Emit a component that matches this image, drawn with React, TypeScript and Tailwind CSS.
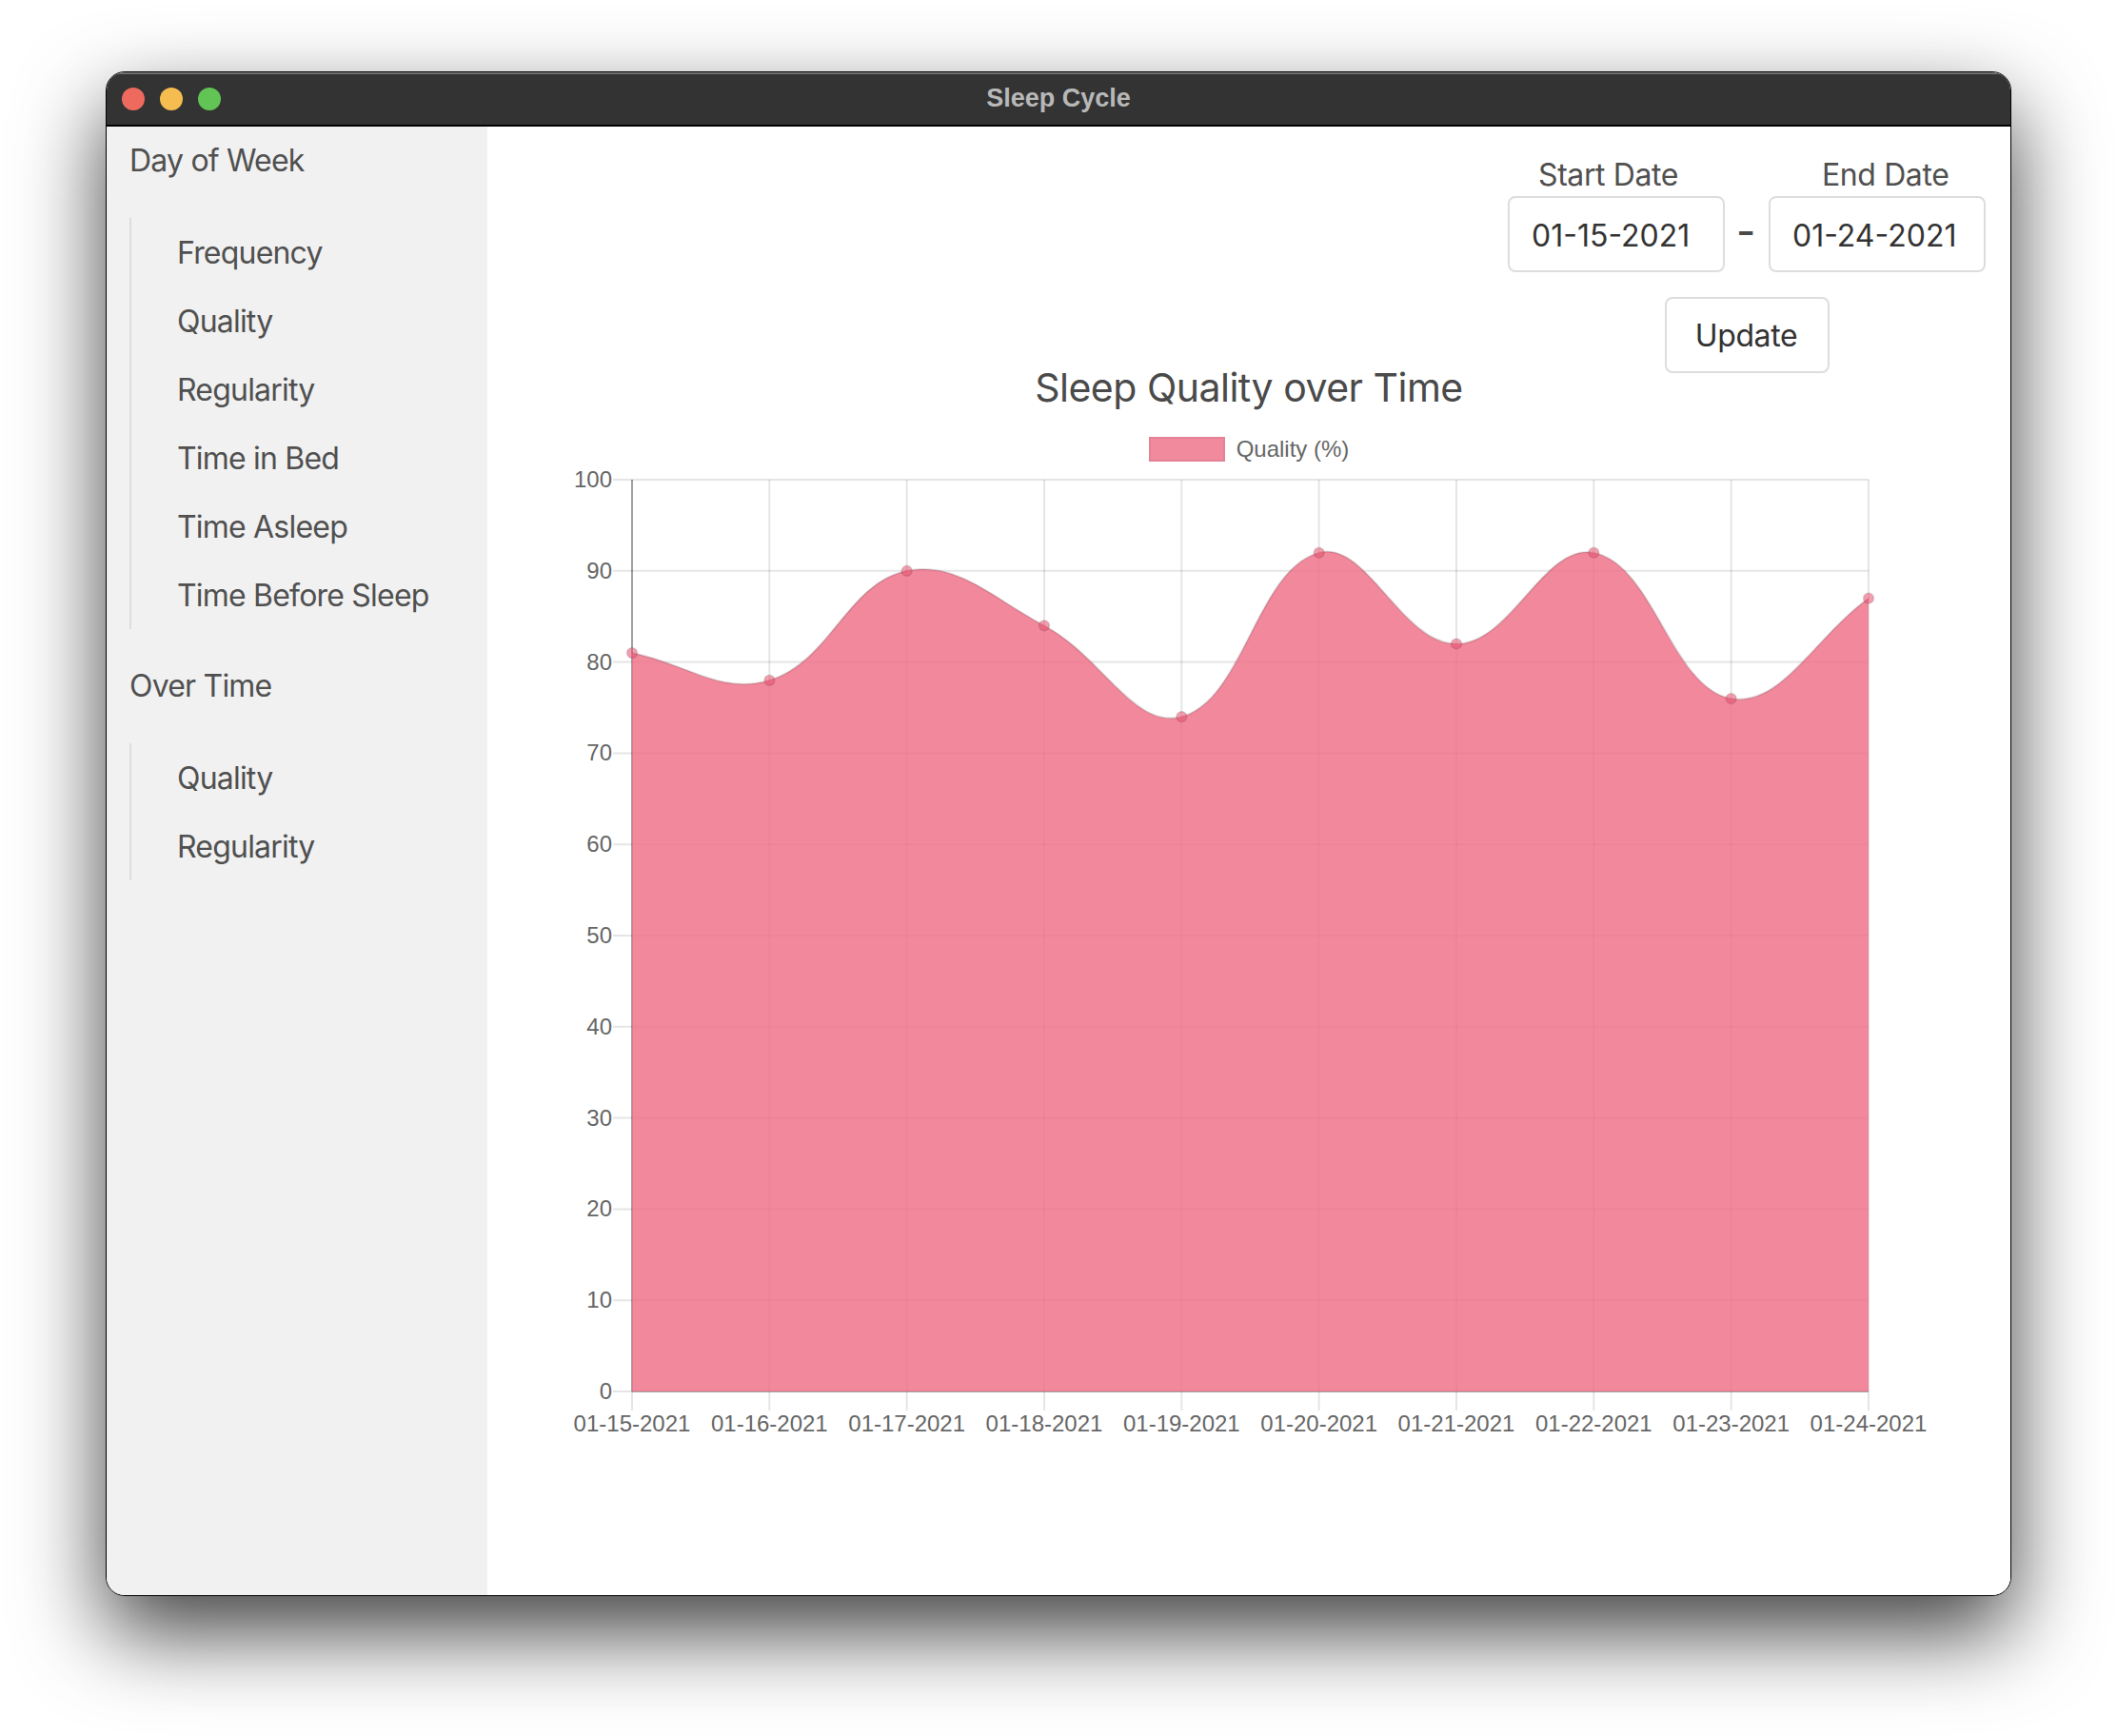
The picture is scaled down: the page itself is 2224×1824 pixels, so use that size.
const qualityData = [81, 78, 90, 84, 74, 92, 82, 92, 76, 87];
const dates = ['01-15-2021', '01-16-2021', '01-17-2021', '01-18-2021', '01-19-2021', '01-20-2021', '01-21-2021', '01-22-2021', '01-23-2021', '01-24-2021'];
const yTicks = [100, 90, 80, 70, 60, 50, 40, 30, 20, 10, 0];

const X0 = 664;
const X_STEP = (1963 - 664) / 9;
const Y0 = 1462;
const Y_UNIT = 9.58;
const TENSION = 0.4;

const toX = (i: number) => X0 + i * X_STEP;
const toY = (v: number) => Y0 - v * Y_UNIT;
const points = qualityData.map((v, i) => ({ x: toX(i), y: toY(v) }));

// same control points chart.js uses for a tension curve
function buildCurve() {
  const controls = points.map((cur, i) => {
    const prev = points[i - 1] || cur;
    const next = points[i + 1] || cur;
    const d01 = Math.hypot(cur.x - prev.x, cur.y - prev.y);
    const d12 = Math.hypot(next.x - cur.x, next.y - cur.y);
    const s01 = d01 / (d01 + d12);
    const s12 = d12 / (d01 + d12);
    return {
      before: { x: cur.x - TENSION * s01 * (next.x - prev.x), y: cur.y - TENSION * s01 * (next.y - prev.y) },
      after: { x: cur.x + TENSION * s12 * (next.x - prev.x), y: cur.y + TENSION * s12 * (next.y - prev.y) },
    };
  });
  let d = `M${points[0].x} ${points[0].y}`;
  for (let i = 1; i < points.length; i++) {
    const a = controls[i - 1].after;
    const b = controls[i].before;
    d += ` C${a.x} ${a.y} ${b.x} ${b.y} ${points[i].x} ${points[i].y}`;
  }
  return d;
}

const curve = buildCurve();
const area = `${curve} L${toX(9)} ${Y0} L${X0} ${Y0} Z`;

function QualityChart() {
  return (
    <svg viewBox="512 490 1600 1030" className="block h-[1030px] w-[1600px]" style={{ fontFamily: '"Liberation Sans", Arial, sans-serif' }}>
      {yTicks.map((t) => (
        <g key={t}>
          <line x1={644} x2={1963} y1={toY(t)} y2={toY(t)} stroke="rgba(0,0,0,0.1)" strokeWidth={2} />
          <text x={643} y={toY(t) + 8} textAnchor="end" fontSize={24} fill="#666">{t}</text>
        </g>
      ))}
      {dates.map((label, i) => (
        <g key={label}>
          <line x1={toX(i)} x2={toX(i)} y1={504} y2={1482} stroke="rgba(0,0,0,0.1)" strokeWidth={2} />
          <text x={toX(i)} y={1504} textAnchor="middle" fontSize={24} fill="#666">{label}</text>
        </g>
      ))}
      <line x1={X0} x2={X0} y1={504} y2={Y0} stroke="rgba(0,0,0,0.3)" strokeWidth={2} />
      <line x1={X0} x2={1963} y1={Y0} y2={Y0} stroke="rgba(0,0,0,0.25)" strokeWidth={2} />
      <path d={area} fill="rgba(238,110,134,0.82)" />
      <path d={curve} fill="none" stroke="rgba(0,0,0,0.12)" strokeWidth={2} />
      {points.map((p, i) => (
        <circle key={i} cx={p.x} cy={p.y} r={5.5} fill="rgba(232,80,112,0.55)" stroke="rgba(0,0,0,0.1)" strokeWidth={1.5} />
      ))}
    </svg>
  );
}

function NavSection({ title, items }: { title: string; items: string[] }) {
  return (
    <div>
      <h2 className="flex h-[72px] items-center pl-[24px] text-[32px] font-normal tracking-[-0.8px] text-[#505050]">{title}</h2>
      <ul className="my-[24px] ml-[24px] border-l-2 border-[#dddddd] pl-[48px]">
        {items.map((item) => (
          <li key={item} className="flex h-[72px] items-center pt-[1px] text-[32px] tracking-[-0.8px] text-[#505050]">{item}</li>
        ))}
      </ul>
    </div>
  );
}

export default function App() {
  return (
    <div className="h-[1824px] w-[2224px] overflow-hidden bg-white pl-[111px] pt-[75px] font-['Inter',sans-serif]">
      <div className="flex h-[1602px] w-[2002px] flex-col overflow-hidden rounded-[20px] border border-black bg-white shadow-[0_38px_90px_rgba(0,0,0,0.75)]">
        {/* Title bar */}
        <div className="relative flex h-[57px] shrink-0 items-center justify-center border-b-2 border-black bg-[#333333] shadow-[inset_0_2px_0_rgba(255,255,255,0.3)]">
          <div className="absolute left-[16px] top-[16px] flex gap-[16px]">
            <span className="h-[24px] w-[24px] rounded-full bg-[#ee6a5f]" />
            <span className="h-[24px] w-[24px] rounded-full bg-[#f5bd4f]" />
            <span className="h-[24px] w-[24px] rounded-full bg-[#61c454]" />
          </div>
          <span className="font-['Liberation_Sans',sans-serif] text-[27px] font-bold text-[#b8b8b8]">Sleep Cycle</span>
        </div>

        <div className="flex min-h-0 flex-1">
          {/* Sidebar */}
          <aside className="w-[400px] shrink-0 bg-[#f1f1f1]">
            <NavSection title="Day of Week" items={['Frequency', 'Quality', 'Regularity', 'Time in Bed', 'Time Asleep', 'Time Before Sleep']} />
            <NavSection title="Over Time" items={['Quality', 'Regularity']} />
          </aside>

          {/* Main */}
          <main className="flex-1 bg-white">
            <div className="flex items-end justify-end gap-[46px] pr-[26px] pt-[31px]">
              <div className="relative">
                <label className="block h-[42px] pl-[32px] text-[32px] leading-[40px] tracking-[-0.4px] text-[#505050]">Start Date</label>
                <input readOnly value="01-15-2021" className="block h-[80px] w-[228px] rounded-[8px] border-2 border-[#dddddd] bg-white pl-[23px] pt-[2px] text-[32px] text-[#333333] outline-none" />
                <span className="absolute left-[240px] top-[51px] text-[44px] font-medium leading-[56px] text-[#4a4a4a]">-</span>
              </div>
              <div>
                <label className="block h-[42px] pl-[56px] text-[32px] leading-[40px] tracking-[-0.4px] text-[#505050]">End Date</label>
                <input readOnly value="01-24-2021" className="block h-[80px] w-[228px] rounded-[8px] border-2 border-[#dddddd] bg-white pl-[23px] pt-[2px] text-[32px] text-[#333333] outline-none" />
              </div>
            </div>
            <div className="mt-[26px] flex justify-end pr-[190px]">
              <button className="h-[80px] w-[173px] rounded-[8px] border-2 border-[#dddddd] bg-white pr-[2px] pt-[2px] text-[32px] tracking-[-0.4px] text-[#333333]">Update</button>
            </div>

            <h1 className="-mt-[13px] h-[56px] text-center text-[41px] font-normal leading-[56px] tracking-[-0.5px] text-[#4a4a4a]">Sleep Quality over Time</h1>
            <div className="mt-[24px] flex h-[26px] items-center justify-center gap-[12px] font-['Liberation_Sans',sans-serif]">
              <span className="h-[26px] w-[80px] border-2 border-[rgba(0,0,0,0.05)] bg-[#f28a9e]" />
              <span className="text-[24px] text-[#666666]">Quality (%)</span>
            </div>
            <div className="mt-[5px]">
              <QualityChart />
            </div>
          </main>
        </div>
      </div>
    </div>
  );
}
